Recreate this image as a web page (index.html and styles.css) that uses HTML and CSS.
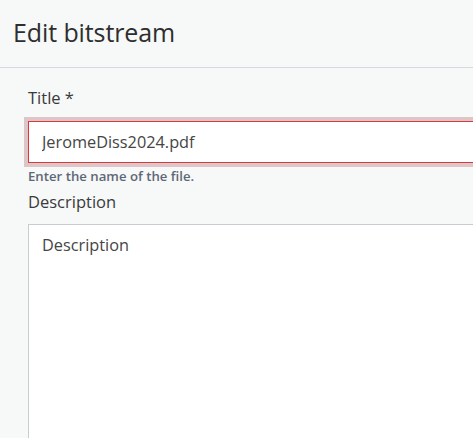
FILE: index.html
```html
<!DOCTYPE html>
<html lang="en">
<head>
<meta charset="utf-8">
<title>Edit bitstream</title>
<link rel="stylesheet" href="styles.css">
</head>
<body>
<div class="modal">
  <div class="modal-header">
    <h4 class="modal-title">Edit bitstream</h4>
  </div>
  <div class="modal-body">
    <div class="form-group">
      <label class="form-label title-label" for="title">Title *</label>
      <input class="form-control is-invalid" id="title" type="text" value="JeromeDiss2024.pdf">
      <small class="form-help">Enter the name of the file.</small>
    </div>
    <div class="form-group desc-group">
      <label class="form-label desc-label" for="desc">Description</label>
      <textarea class="form-control textarea" id="desc" placeholder="Description"></textarea>
    </div>
  </div>
</div>
</body>
</html>
```
FILE: styles.css
```css
html, body {
  margin: 0;
  padding: 0;
  height: 100%;
  overflow: hidden;
}
body {
  background: #f7f8f8;
  font-family: "Open Sans", "Noto Sans", sans-serif;
  color: #2b2b2b;
}
.modal {
  width: 760px;
}
.modal-header {
  height: 68px;
  border-bottom: 1px solid #d6dae0;
  display: flex;
  align-items: center;
  padding: 0 13px;
  box-sizing: border-box;
}
.modal-title {
  margin: 0;
  font-size: 25px;
  font-weight: 400;
  line-height: 30px;
  color: #2e2e2e;
  padding-bottom: 4px;
  letter-spacing: -0.1px;
}
.modal-body {
  padding: 18px 0 0 28px;
}
.form-group {
  display: flex;
  flex-direction: column;
}
.desc-group {
  margin-top: 5px;
}
.form-label {
  font-size: 16.5px;
  font-weight: 400;
  line-height: 24px;
  color: #3a3a3a;
}
.title-label {
  margin-bottom: 11px;
}
.desc-label {
  margin-bottom: 10px;
}
.form-control {
  box-sizing: border-box;
  width: 700px;
  border: 1px solid #c9cdd2;
  background: #fff;
  font-family: inherit;
  font-size: 16.3px;
  font-weight: 400;
  color: #454545;
  padding: 0 13px;
  outline: none;
}
.is-invalid {
  height: 42px;
  border-color: #d9363e;
  box-shadow: 0 0 0 4px #dcc6c7;
}
.form-help {
  font-size: 13.2px;
  font-weight: 600;
  color: #5d6877;
  margin-top: 4px;
  line-height: 18px;
}
.textarea {
  height: 260px;
  padding-top: 8px;
  resize: none;
  line-height: 24px;
}
.textarea::placeholder {
  color: #454545;
  opacity: 1;
}
```
